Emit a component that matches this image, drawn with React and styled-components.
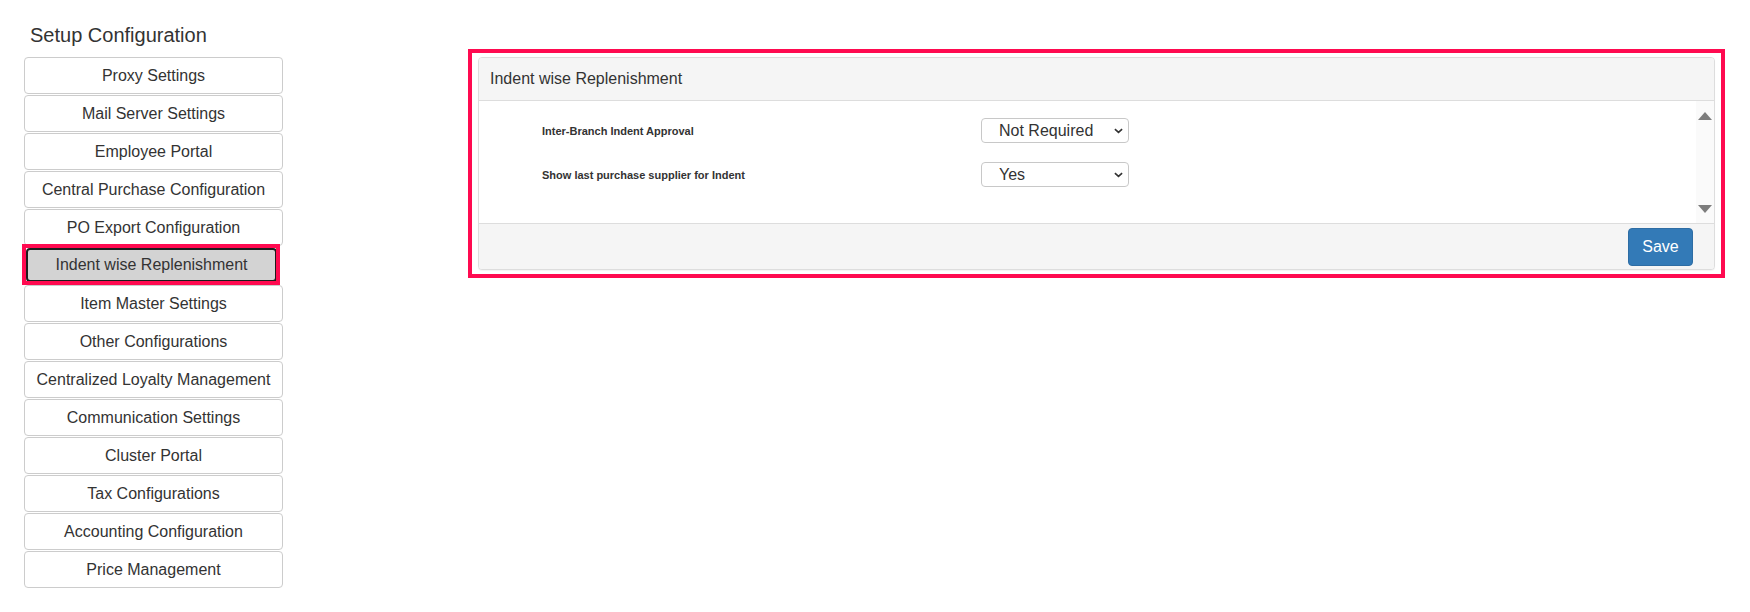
import React from 'react'
import styled, { createGlobalStyle } from 'styled-components'

const GlobalStyle = createGlobalStyle`
  html, body {
    margin: 0;
    padding: 0;
    background: #fff;
  }
  body {
    font-family: "Liberation Sans", Arial, sans-serif;
    color: #333;
  }
  * {
    box-sizing: border-box;
  }
`

const menuItems = [
  'Proxy Settings',
  'Mail Server Settings',
  'Employee Portal',
  'Central Purchase Configuration',
  'PO Export Configuration',
  'Indent wise Replenishment',
  'Item Master Settings',
  'Other Configurations',
  'Centralized Loyalty Management',
  'Communication Settings',
  'Cluster Portal',
  'Tax Configurations',
  'Accounting Configuration',
  'Price Management',
]

const fields = [
  { label: 'Inter-Branch Indent Approval', value: 'Not Required', options: ['Required', 'Not Required'] },
  { label: 'Show last purchase supplier for Indent', value: 'Yes', options: ['Yes', 'No'] },
]

function App() {
  return (
    <Page>
      <GlobalStyle />
      <Sidebar>
        <Title>Setup Configuration</Title>
        {menuItems.map(item => (
          <MenuButton key={item} $active={item === 'Indent wise Replenishment'}>
            {item}
          </MenuButton>
        ))}
      </Sidebar>

      <Highlight>
        <Panel>
          <PanelHeading>Indent wise Replenishment</PanelHeading>
          <PanelBody>
            <Fields>
              {fields.map(f => (
                <React.Fragment key={f.label}>
                  <FieldLabel>{f.label}</FieldLabel>
                  <SelectWrap>
                    <Select defaultValue={f.value}>
                      {f.options.map(o => <option key={o}>{o}</option>)}
                    </Select>
                    <Chevron viewBox="0 0 10 6">
                      <path d="M1 1l4 3.6L9 1" />
                    </Chevron>
                  </SelectWrap>
                </React.Fragment>
              ))}
            </Fields>
            <Scrollbar>
              <Arrow $up />
              <Arrow />
            </Scrollbar>
          </PanelBody>
          <PanelFooter>
            <SaveButton>Save</SaveButton>
          </PanelFooter>
        </Panel>
      </Highlight>
    </Page>
  )
}

export default App

const Page = styled.div`
  display: flex;
  align-items: flex-start;
  width: 1750px;
  height: 612px;
  padding-left: 24px;
`

const Sidebar = styled.div`
  width: 259px;
  display: flex;
  flex-direction: column;
  padding-top: 24px;
`

const Title = styled.div`
  font-size: 20px;
  line-height: 22px;
  padding-left: 6px;
  margin-bottom: 11px;
  color: #333;
`

const MenuButton = styled.div`
  position: relative;
  height: ${p => (p.$active ? '34px' : '37px')};
  margin: ${p => (p.$active ? '1px 6px 3px 2px' : '0 0 1px 0')};
  display: flex;
  align-items: center;
  justify-content: center;
  font-size: 16px;
  color: #333;
  background: ${p => (p.$active ? '#d3d3d3' : '#fff')};
  border: ${p => (p.$active ? '2px solid #1c1c1c' : '1px solid #ccc')};
  border-radius: 4px;
  white-space: nowrap;
  cursor: pointer;

  &::after {
    content: '';
    display: ${p => (p.$active ? 'block' : 'none')};
    position: absolute;
    top: -6px;
    left: -6px;
    right: -5px;
    bottom: -5px;
    border: 4px solid #ff0a50;
  }
`

const Highlight = styled.div`
  margin-top: 49px;
  margin-left: 185px;
  width: 1257px;
  border: 4px solid #ff0a50;
  padding: 4px 6px 4px 6px;
`

const Panel = styled.div`
  border: 1px solid #ddd;
  border-radius: 4px;
  background: #fff;
  box-shadow: 0 1px 1px rgba(0, 0, 0, 0.05);
  overflow: hidden;
`

const PanelHeading = styled.div`
  height: 43px;
  display: flex;
  align-items: center;
  padding-left: 11px;
  font-size: 16px;
  color: #333;
  background: #f5f5f5;
  border-bottom: 1px solid #ddd;
`

const PanelBody = styled.div`
  display: flex;
  height: 123px;
  border-bottom: 1px solid #ddd;
`

const Fields = styled.div`
  flex: 1;
  display: grid;
  grid-template-columns: 439px 148px;
  grid-auto-rows: 25px;
  row-gap: 19px;
  align-items: center;
  align-content: start;
  padding: 17px 0 0 63px;
`

const FieldLabel = styled.div`
  font-size: 11px;
  font-weight: bold;
  color: #333;
`

const SelectWrap = styled.div`
  position: relative;
  height: 25px;
`

const Select = styled.select`
  appearance: none;
  width: 100%;
  height: 25px;
  padding: 0 24px 0 17px;
  font-family: "Liberation Sans", Arial, sans-serif;
  font-size: 16px;
  color: #333;
  background: #fff;
  border: 1px solid #c8c8c8;
  border-radius: 4px;
`

const Chevron = styled.svg`
  position: absolute;
  right: 6px;
  top: 10px;
  width: 9px;
  height: 6px;
  fill: none;
  stroke: #333;
  stroke-width: 1.8;
  pointer-events: none;
`

const Scrollbar = styled.div`
  width: 18px;
  background: #fafafa;
  display: flex;
  flex-direction: column;
  justify-content: space-between;
  align-items: center;
  padding: 11px 0 10px;
`

const Arrow = styled.div`
  width: 0;
  height: 0;
  border-left: 7px solid transparent;
  border-right: 7px solid transparent;
  ${p => (p.$up ? 'border-bottom: 8px solid #7d7d7d;' : 'border-top: 8px solid #7d7d7d;')}
`

const PanelFooter = styled.div`
  height: 45px;
  display: flex;
  justify-content: flex-end;
  align-items: flex-start;
  padding: 4px 21px 0 0;
  background: #f5f5f5;
`

const SaveButton = styled.button`
  width: 65px;
  height: 38px;
  font-family: "Liberation Sans", Arial, sans-serif;
  font-size: 16px;
  color: #fff;
  background: #337ab7;
  border: 1px solid #2e6da4;
  border-radius: 4px;
  cursor: pointer;
`
